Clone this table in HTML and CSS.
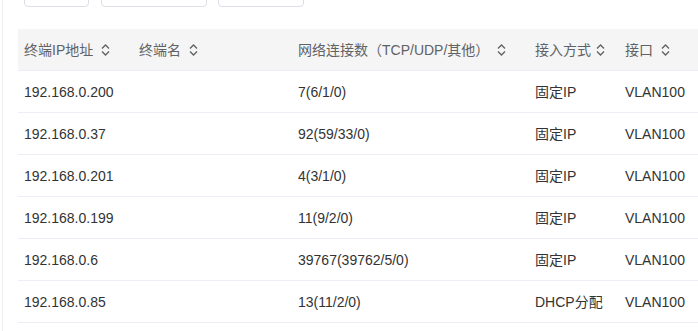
FILE: index.html
```html
<!DOCTYPE html>
<html lang="zh">
<head>
<meta charset="utf-8">
<link rel="stylesheet" href="styles.css">
</head>
<body>
<div class="page">
  <div class="toolbar">
    <button class="btn b1"></button>
    <button class="btn b2"></button>
    <button class="btn b3"></button>
  </div>
  <div class="table">
    <div class="row head">
      <div class="cell">终端IP地址<span class="sort"><svg width="9" height="14" viewBox="0 0 9 14"><path d="M1 5.5 L4.5 2 L8 5.5 M1 8.5 L4.5 12 L8 8.5" fill="none" stroke="#5f6266" stroke-width="1.3"/></svg></span></div>
      <div class="cell">终端名<span class="sort"><svg width="9" height="14" viewBox="0 0 9 14"><path d="M1 5.5 L4.5 2 L8 5.5 M1 8.5 L4.5 12 L8 8.5" fill="none" stroke="#5f6266" stroke-width="1.3"/></svg></span></div>
      <div class="cell">网络连接数（TCP/UDP/其他）<span class="sort"><svg width="9" height="14" viewBox="0 0 9 14"><path d="M1 5.5 L4.5 2 L8 5.5 M1 8.5 L4.5 12 L8 8.5" fill="none" stroke="#5f6266" stroke-width="1.3"/></svg></span></div>
      <div class="cell">接入方式<span class="sort s-tight"><svg width="9" height="14" viewBox="0 0 9 14"><path d="M1 5.5 L4.5 2 L8 5.5 M1 8.5 L4.5 12 L8 8.5" fill="none" stroke="#5f6266" stroke-width="1.3"/></svg></span></div>
      <div class="cell">接口<span class="sort"><svg width="9" height="14" viewBox="0 0 9 14"><path d="M1 5.5 L4.5 2 L8 5.5 M1 8.5 L4.5 12 L8 8.5" fill="none" stroke="#5f6266" stroke-width="1.3"/></svg></span></div>
    </div>
    <div class="row">
      <div class="cell">192.168.0.200</div><div class="cell"></div><div class="cell">7(6/1/0)</div><div class="cell">固定IP</div><div class="cell">VLAN100</div>
    </div>
    <div class="row">
      <div class="cell">192.168.0.37</div><div class="cell"></div><div class="cell">92(59/33/0)</div><div class="cell">固定IP</div><div class="cell">VLAN100</div>
    </div>
    <div class="row">
      <div class="cell">192.168.0.201</div><div class="cell"></div><div class="cell">4(3/1/0)</div><div class="cell">固定IP</div><div class="cell">VLAN100</div>
    </div>
    <div class="row">
      <div class="cell">192.168.0.199</div><div class="cell"></div><div class="cell">11(9/2/0)</div><div class="cell">固定IP</div><div class="cell">VLAN100</div>
    </div>
    <div class="row">
      <div class="cell">192.168.0.6</div><div class="cell"></div><div class="cell">39767(39762/5/0)</div><div class="cell">固定IP</div><div class="cell">VLAN100</div>
    </div>
    <div class="row">
      <div class="cell">192.168.0.85</div><div class="cell"></div><div class="cell">13(11/2/0)</div><div class="cell">DHCP分配</div><div class="cell">VLAN100</div>
    </div>
  </div>
</div>
</body>
</html>
```
FILE: styles.css
```css
html, body {
  margin: 0;
  padding: 0;
  background: #fff;
  overflow: hidden;
}
body {
  width: 698px;
  height: 331px;
  font-family: "Liberation Sans", "Noto Sans CJK SC", sans-serif;
  font-size: 14px;
  line-height: 20px;
  color: #333333;
}
.page {
  display: flow-root;
  margin-left: 2px;
  border-left: 1px solid #efefef;
  padding-left: 15px;
  height: 331px;
}
.toolbar {
  display: flex;
  gap: 11px;
  margin-top: -25px;
  padding-left: 6px;
  height: 32px;
}
.btn {
  height: 32px;
  border: 1px solid #dcdfe6;
  border-radius: 4px;
  background: #fff;
  padding: 0;
}
.b1 { width: 65px; }
.b2 { width: 106px; margin-left: 1px; }
.b3 { width: 86px; }
.table {
  margin-top: 22px;
}
.row {
  display: grid;
  grid-template-columns: 115px 159px 237px 90px 1fr;
  height: 41px;
  border-bottom: 1px solid #ebeef5;
  align-items: center;
}
.row.head {
  background: #f5f5f5;
  color: #606266;
}
.cell {
  padding-left: 6px;
  white-space: nowrap;
  overflow: hidden;
  display: flex;
  align-items: center;
}
.sort {
  display: inline-flex;
  margin-left: 8px;
}
.s-tight {
  margin-left: 5px;
}
```
